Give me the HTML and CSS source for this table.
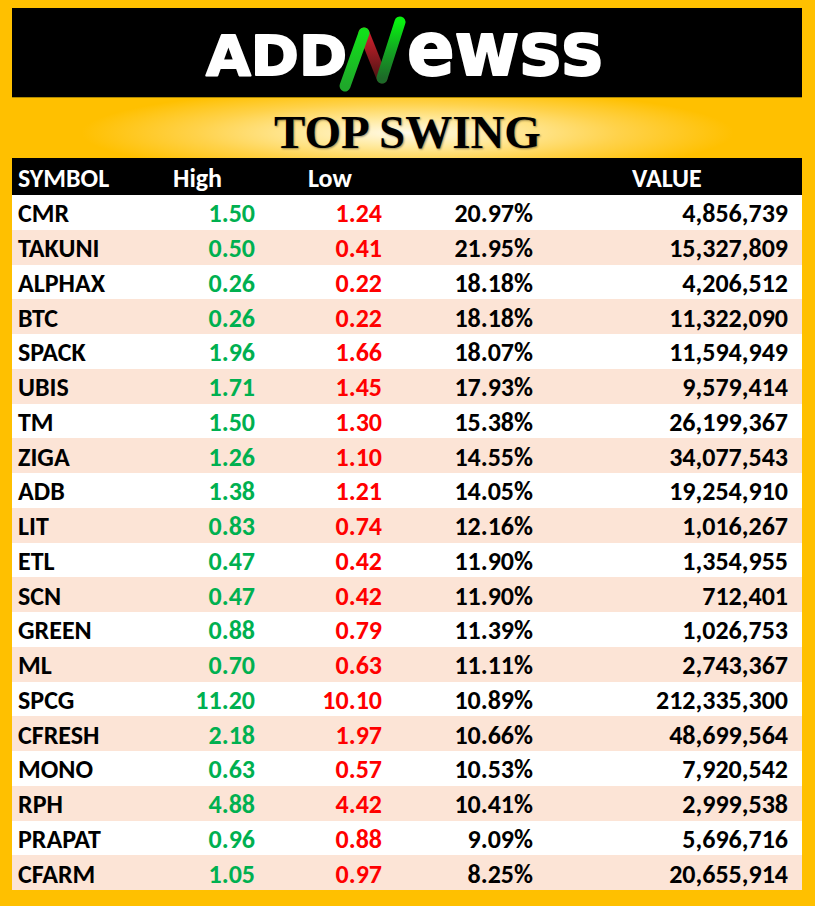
FILE: index.html
```html
<!DOCTYPE html>
<html lang="en">
<head>
<meta charset="utf-8">
<title>Top Swing</title>
<link rel="stylesheet" href="styles.css">
</head>
<body>
<div class="page">
  <header class="logo-box">
    <svg class="logo" width="440" height="90" viewBox="0 0 440 90" xmlns="http://www.w3.org/2000/svg">
      <defs>
        <linearGradient id="gLeft" x1="0" y1="1" x2="0" y2="0">
          <stop offset="0" stop-color="#1fa82a"/>
          <stop offset="1" stop-color="#12e01a"/>
        </linearGradient>
        <linearGradient id="gRight" x1="0" y1="1" x2="0" y2="0">
          <stop offset="0" stop-color="#1d6a28"/>
          <stop offset="0.5" stop-color="#13a622"/>
          <stop offset="1" stop-color="#08f010"/>
        </linearGradient>
        <linearGradient id="gRed" x1="0" y1="0" x2="0" y2="1">
          <stop offset="0" stop-color="#d0202c"/>
          <stop offset="1" stop-color="#4e1414"/>
        </linearGradient>
      </defs>
      <text class="logo-text" x="19" y="67" font-size="56" textLength="141" lengthAdjust="spacingAndGlyphs">ADD</text>
      <line x1="177" y1="25" x2="195" y2="70" stroke="url(#gRed)" stroke-width="11" stroke-linecap="round"/>
      <line x1="158" y1="78" x2="177" y2="25" stroke="url(#gLeft)" stroke-width="11" stroke-linecap="round"/>
      <line x1="195" y1="70" x2="213" y2="14" stroke="url(#gRight)" stroke-width="11" stroke-linecap="round"/>
      <text class="logo-text" x="220" y="67" font-size="74" textLength="196" lengthAdjust="spacingAndGlyphs">ewss</text>
    </svg>
  </header>

  <div class="title-band">
    <h1 class="title">TOP SWING</h1>
  </div>

  <div class="table">
    <div class="row head">
      <div class="c sym">SYMBOL</div>
      <div class="c h-high">High</div>
      <div class="c h-low">Low</div>
      <div class="c h-pct"></div>
      <div class="c h-val">VALUE</div>
    </div>
    <div class="row"><div class="c sym">CMR</div><div class="c high">1.50</div><div class="c low">1.24</div><div class="c pct">20.97%</div><div class="c val">4,856,739</div></div>
    <div class="row alt"><div class="c sym">TAKUNI</div><div class="c high">0.50</div><div class="c low">0.41</div><div class="c pct">21.95%</div><div class="c val">15,327,809</div></div>
    <div class="row"><div class="c sym">ALPHAX</div><div class="c high">0.26</div><div class="c low">0.22</div><div class="c pct">18.18%</div><div class="c val">4,206,512</div></div>
    <div class="row alt"><div class="c sym">BTC</div><div class="c high">0.26</div><div class="c low">0.22</div><div class="c pct">18.18%</div><div class="c val">11,322,090</div></div>
    <div class="row"><div class="c sym">SPACK</div><div class="c high">1.96</div><div class="c low">1.66</div><div class="c pct">18.07%</div><div class="c val">11,594,949</div></div>
    <div class="row alt"><div class="c sym">UBIS</div><div class="c high">1.71</div><div class="c low">1.45</div><div class="c pct">17.93%</div><div class="c val">9,579,414</div></div>
    <div class="row"><div class="c sym">TM</div><div class="c high">1.50</div><div class="c low">1.30</div><div class="c pct">15.38%</div><div class="c val">26,199,367</div></div>
    <div class="row alt"><div class="c sym">ZIGA</div><div class="c high">1.26</div><div class="c low">1.10</div><div class="c pct">14.55%</div><div class="c val">34,077,543</div></div>
    <div class="row"><div class="c sym">ADB</div><div class="c high">1.38</div><div class="c low">1.21</div><div class="c pct">14.05%</div><div class="c val">19,254,910</div></div>
    <div class="row alt"><div class="c sym">LIT</div><div class="c high">0.83</div><div class="c low">0.74</div><div class="c pct">12.16%</div><div class="c val">1,016,267</div></div>
    <div class="row"><div class="c sym">ETL</div><div class="c high">0.47</div><div class="c low">0.42</div><div class="c pct">11.90%</div><div class="c val">1,354,955</div></div>
    <div class="row alt"><div class="c sym">SCN</div><div class="c high">0.47</div><div class="c low">0.42</div><div class="c pct">11.90%</div><div class="c val">712,401</div></div>
    <div class="row"><div class="c sym">GREEN</div><div class="c high">0.88</div><div class="c low">0.79</div><div class="c pct">11.39%</div><div class="c val">1,026,753</div></div>
    <div class="row alt"><div class="c sym">ML</div><div class="c high">0.70</div><div class="c low">0.63</div><div class="c pct">11.11%</div><div class="c val">2,743,367</div></div>
    <div class="row"><div class="c sym">SPCG</div><div class="c high">11.20</div><div class="c low">10.10</div><div class="c pct">10.89%</div><div class="c val">212,335,300</div></div>
    <div class="row alt"><div class="c sym">CFRESH</div><div class="c high">2.18</div><div class="c low">1.97</div><div class="c pct">10.66%</div><div class="c val">48,699,564</div></div>
    <div class="row"><div class="c sym">MONO</div><div class="c high">0.63</div><div class="c low">0.57</div><div class="c pct">10.53%</div><div class="c val">7,920,542</div></div>
    <div class="row alt"><div class="c sym">RPH</div><div class="c high">4.88</div><div class="c low">4.42</div><div class="c pct">10.41%</div><div class="c val">2,999,538</div></div>
    <div class="row"><div class="c sym">PRAPAT</div><div class="c high">0.96</div><div class="c low">0.88</div><div class="c pct">9.09%</div><div class="c val">5,696,716</div></div>
    <div class="row alt"><div class="c sym">CFARM</div><div class="c high">1.05</div><div class="c low">0.97</div><div class="c pct">8.25%</div><div class="c val">20,655,914</div></div>
  </div>
</div>
</body>
</html>
```

FILE: styles.css
```css
html, body {
  margin: 0;
  padding: 0;
}

body {
  background: #ffc000;
  width: 815px;
  height: 906px;
  overflow: hidden;
}

.page {
  padding-top: 8px;
  display: flex;
  flex-direction: column;
}

.logo-box {
  margin: 0 13px 0 12px;
  height: 90px;
  background: #000;
  border-bottom: 1px solid #b08a00;
  box-sizing: border-box;
  display: flex;
  justify-content: center;
  align-items: flex-start;
}

.logo {
  display: block;
  overflow: visible;
}

.logo-text {
  font-family: "DejaVu Sans", sans-serif;
  font-weight: bold;
  fill: #fff;
  stroke: #fff;
  stroke-width: 2;
  stroke-linejoin: round;
}

.title-band {
  height: 60px;
  background: radial-gradient(ellipse 40% 75% at 50% 58%, #fffbea 0%, #ffeaa0 30%, #ffd24a 65%, #ffc000 100%);
  display: flex;
  justify-content: center;
  align-items: center;
}

.title {
  margin: 0;
  padding-top: 8px;
  font-family: "Liberation Serif", "Times New Roman", serif;
  font-weight: bold;
  font-size: 47px;
  line-height: 1;
  color: #000;
  text-shadow: 1px 1px 2px rgba(0, 0, 0, 0.4);
}

.table {
  margin: 0 13px 0 12px;
  font-family: Carlito, Calibri, "Open Sans", sans-serif;
  font-weight: bold;
  font-size: 26px;
}

.row {
  display: grid;
  grid-template-columns: 153px 95px 130px 150px 262px;
  height: 34.75px;
  background: #fff;
  color: #000;
}

.row.alt {
  background: #fce4d6;
}

.row.head {
  height: 37px;
  background: #000;
  color: #fff;
}

.c {
  display: flex;
  align-items: center;
  padding-top: 2px;
  white-space: nowrap;
  box-sizing: border-box;
}

.sym {
  padding-left: 6px;
}

.high {
  justify-content: flex-end;
  padding-right: 5px;
  color: #00b050;
}

.low {
  justify-content: flex-end;
  padding-right: 8px;
  color: #ff0000;
}

.pct {
  justify-content: flex-end;
  padding-right: 7px;
}

.val {
  justify-content: flex-end;
  padding-right: 14px;
}

.h-high {
  padding-left: 8px;
}

.h-low {
  padding-left: 48px;
}

.h-val {
  padding-left: 92px;
}
```
